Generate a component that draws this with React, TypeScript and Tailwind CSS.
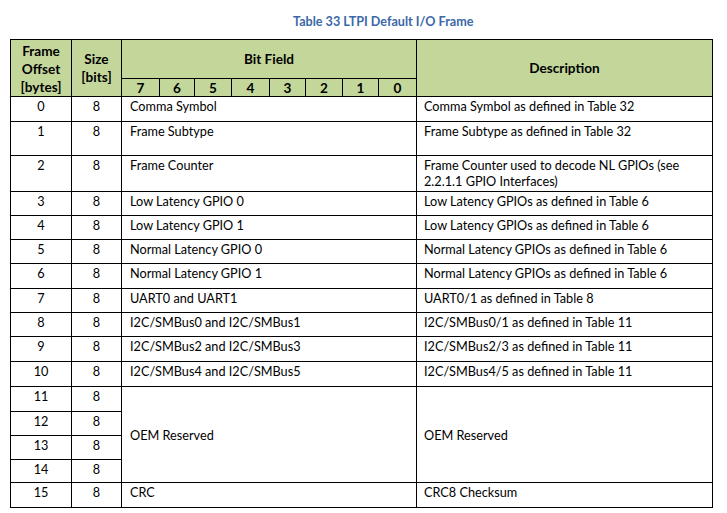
import React from "react";

type Row = { o: string; bit?: string; desc?: string; descLines?: string[] };

const body: Row[] = [
  { o: "0", bit: "Comma Symbol", desc: "Comma Symbol as defined in Table 32" },
  { o: "1", bit: "Frame Subtype", desc: "Frame Subtype as defined in Table 32" },
  {
    o: "2",
    bit: "Frame Counter",
    descLines: ["Frame Counter used to decode NL GPIOs (see", "2.2.1.1 GPIO Interfaces)"],
  },
  { o: "3", bit: "Low Latency GPIO 0", desc: "Low Latency GPIOs as defined in Table 6" },
  { o: "4", bit: "Low Latency GPIO 1", desc: "Low Latency GPIOs as defined in Table 6" },
  { o: "5", bit: "Normal Latency GPIO 0", desc: "Normal Latency GPIOs as defined in Table 6" },
  { o: "6", bit: "Normal Latency GPIO 1", desc: "Normal Latency GPIOs as defined in Table 6" },
  { o: "7", bit: "UART0 and UART1", desc: "UART0/1 as defined in Table 8" },
  { o: "8", bit: "I2C/SMBus0 and I2C/SMBus1", desc: "I2C/SMBus0/1 as defined in Table 11" },
  { o: "9", bit: "I2C/SMBus2 and I2C/SMBus3", desc: "I2C/SMBus2/3 as defined in Table 11" },
  { o: "10", bit: "I2C/SMBus4 and I2C/SMBus5", desc: "I2C/SMBus4/5 as defined in Table 11" },
];

const cell = "border-r border-b border-black";
const head = "border-r border-b border-black bg-[#c4d79b] font-bold text-black";

export default function App() {
  return (
    <div className="w-[727px] h-[513px] bg-white [font-family:Lato,'Liberation_Sans',sans-serif] text-black overflow-hidden">
      <div className="pl-[293px] pt-[13px] h-[39px] text-[12.6px] leading-[18px] font-bold text-[#3b68a6]">
        Table 33 LTPI Default I/O Frame
      </div>
      <div className="ml-[10px] w-[703px] grid grid-cols-[61px_50px_38px_35px_37px_38px_36px_37px_36px_38px_296px] grid-rows-[39px_18px_25px_34px_36px_24px_24px_24px_25px_24px_24px_25px_25px_25px_24px_24px_23px_25px] border-l border-t border-black text-[12.7px] leading-[16px]">
        <div className={`${head} row-span-2 flex flex-col items-center justify-center text-[13.6px] leading-[18px] pt-[1px]`}>
          <span>Frame</span>
          <span>Offset</span>
          <span>[bytes]</span>
        </div>
        <div className={`${head} row-span-2 flex flex-col items-center justify-center text-[13.6px] leading-[18px]`}>
          <span>Size</span>
          <span>[bits]</span>
        </div>
        <div className={`${head} col-span-8 flex items-center justify-center text-[13.6px]`}>Bit Field</div>
        <div className={`${head} row-span-2 flex items-center justify-center text-[13.6px]`}>Description</div>
        {["7", "6", "5", "4", "3", "2", "1", "0"].map((b) => (
          <div key={b} className={`${head} flex items-center justify-center text-[13.6px]`}>
            {b}
          </div>
        ))}
        {body.map((r) => (
          <React.Fragment key={r.o}>
            <div className={`${cell} text-center pt-[1px]`}>{r.o}</div>
            <div className={`${cell} text-center pt-[1px]`}>8</div>
            <div className={`${cell} col-span-8 pl-[8px] pt-[1px]`}>{r.bit}</div>
            <div className={`${cell} pl-[7px] pt-[1px]`}>
              {r.descLines ? r.descLines.map((l) => <div key={l}>{l}</div>) : r.desc}
            </div>
          </React.Fragment>
        ))}
        <div className={`${cell} text-center pt-[1px]`}>11</div>
        <div className={`${cell} text-center pt-[1px]`}>8</div>
        <div className={`${cell} col-span-8 row-span-4 pl-[8px] flex items-center`}>OEM Reserved</div>
        <div className={`${cell} row-span-4 pl-[7px] flex items-center`}>OEM Reserved</div>
        <div className={`${cell} text-center pt-[1px]`}>12</div>
        <div className={`${cell} text-center pt-[1px]`}>8</div>
        <div className={`${cell} text-center pt-[1px]`}>13</div>
        <div className={`${cell} text-center pt-[1px]`}>8</div>
        <div className={`${cell} text-center pt-[1px]`}>14</div>
        <div className={`${cell} text-center pt-[1px]`}>8</div>
        <div className={`${cell} text-center pt-[1px]`}>15</div>
        <div className={`${cell} text-center pt-[1px]`}>8</div>
        <div className={`${cell} col-span-8 pl-[8px] pt-[1px]`}>CRC</div>
        <div className={`${cell} pl-[7px] pt-[1px]`}>CRC8 Checksum</div>
      </div>
    </div>
  );
}
